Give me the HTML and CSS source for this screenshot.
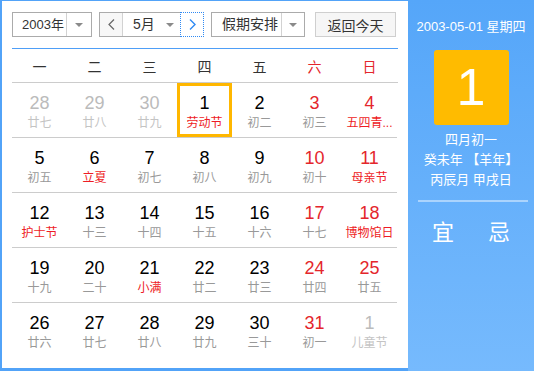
FILE: index.html
```html
<!DOCTYPE html>
<html lang="zh-CN">
<head>
  <meta charset="UTF-8" />
  <meta name="viewport" content="width=device-width, initial-scale=1.0" />
  <title>万年历</title>
  <link rel="stylesheet" href="styles.css">
</head>
<body>

<div class="calendar">
  <div class="main">
    <div class="toolbar">
      <div class="select year-select">
        <span class="select-label">2003年</span>
        <span class="select-arrow"></span>
      </div>
      <div class="select month-select">
        <span class="month-btn prev">
          <svg width="7" height="11" viewBox="0 0 7 11"><polyline points="6,0.5 1,5.5 6,10.5" fill="none" stroke="#666" stroke-width="1.2"/></svg>
        </span>
        <span class="select-label">5月</span>
        <span class="plain-arrow"></span>
        <span class="month-btn next">
          <svg width="7" height="11" viewBox="0 0 7 11"><polyline points="1,0.5 6,5.5 1,10.5" fill="none" stroke="#2f8af3" stroke-width="1.4"/></svg>
        </span>
      </div>
      <div class="select holiday-select">
        <span class="select-label">假期安排</span>
        <span class="select-arrow"></span>
      </div>
      <button class="today-btn">返回今天</button>
    </div>

    <div class="weekdays">
      <span>一</span><span>二</span><span>三</span><span>四</span><span>五</span>
      <span class="weekend">六</span><span class="weekend">日</span>
    </div>

    <div class="days">
      <div class="day other"><div class="num">28</div><div class="lunar">廿七</div></div>
      <div class="day other"><div class="num">29</div><div class="lunar">廿八</div></div>
      <div class="day other"><div class="num">30</div><div class="lunar">廿九</div></div>
      <div class="day selected"><div class="num">1</div><div class="lunar fest">劳动节</div></div>
      <div class="day"><div class="num">2</div><div class="lunar">初二</div></div>
      <div class="day weekend"><div class="num">3</div><div class="lunar">初三</div></div>
      <div class="day weekend"><div class="num">4</div><div class="lunar fest" title="五四青年节">五四青...</div></div>

      <div class="day"><div class="num">5</div><div class="lunar">初五</div></div>
      <div class="day"><div class="num">6</div><div class="lunar fest">立夏</div></div>
      <div class="day"><div class="num">7</div><div class="lunar">初七</div></div>
      <div class="day"><div class="num">8</div><div class="lunar">初八</div></div>
      <div class="day"><div class="num">9</div><div class="lunar">初九</div></div>
      <div class="day weekend"><div class="num">10</div><div class="lunar">初十</div></div>
      <div class="day weekend"><div class="num">11</div><div class="lunar fest">母亲节</div></div>

      <div class="day"><div class="num">12</div><div class="lunar fest">护士节</div></div>
      <div class="day"><div class="num">13</div><div class="lunar">十三</div></div>
      <div class="day"><div class="num">14</div><div class="lunar">十四</div></div>
      <div class="day"><div class="num">15</div><div class="lunar">十五</div></div>
      <div class="day"><div class="num">16</div><div class="lunar">十六</div></div>
      <div class="day weekend"><div class="num">17</div><div class="lunar">十七</div></div>
      <div class="day weekend"><div class="num">18</div><div class="lunar fest">博物馆日</div></div>

      <div class="day"><div class="num">19</div><div class="lunar">十九</div></div>
      <div class="day"><div class="num">20</div><div class="lunar">二十</div></div>
      <div class="day"><div class="num">21</div><div class="lunar fest">小满</div></div>
      <div class="day"><div class="num">22</div><div class="lunar">廿二</div></div>
      <div class="day"><div class="num">23</div><div class="lunar">廿三</div></div>
      <div class="day weekend"><div class="num">24</div><div class="lunar">廿四</div></div>
      <div class="day weekend"><div class="num">25</div><div class="lunar">廿五</div></div>

      <div class="day"><div class="num">26</div><div class="lunar">廿六</div></div>
      <div class="day"><div class="num">27</div><div class="lunar">廿七</div></div>
      <div class="day"><div class="num">28</div><div class="lunar">廿八</div></div>
      <div class="day"><div class="num">29</div><div class="lunar">廿九</div></div>
      <div class="day"><div class="num">30</div><div class="lunar">三十</div></div>
      <div class="day weekend"><div class="num">31</div><div class="lunar">初一</div></div>
      <div class="day other"><div class="num">1</div><div class="lunar">儿童节</div></div>
    </div>
  </div>

  <div class="side">
    <div class="side-date">2003-05-01 星期四</div>
    <div class="big-day">1</div>
    <div class="side-lunar">
      <div>四月初一</div>
      <div>癸未年 【羊年】</div>
      <div>丙辰月 甲戌日</div>
    </div>
    <div class="side-line"></div>
    <div class="yiji">
      <span>宜</span>
      <span>忌</span>
    </div>
  </div>
</div>

</body>
</html>
```

FILE: styles.css
```css
* {
  box-sizing: border-box;
}

body {
  margin: 0;
  padding: 0;
  font-family: "Liberation Sans", "Noto Sans CJK SC", sans-serif;
  background: #fff;
}

.calendar {
  display: flex;
  width: 534px;
  height: 371px;
  background: #52a3f8;
}

.main {
  width: 406px;
  height: 367px;
  margin: 1px 0 3px 2px;
  padding: 11px 10px 0;
  background: #fff;
}

/* toolbar */
.toolbar {
  display: flex;
  align-items: flex-start;
  height: 37px;
  padding-bottom: 11px;
  border-bottom: 1px solid #4e9ef7;
}

.select {
  display: flex;
  align-items: center;
  height: 25px;
  border: 1px solid #ababab;
  font-size: 14px;
  color: #333;
  background: #fff;
}

.select-label {
  flex: 1;
  line-height: 23px;
  padding-left: 10px;
  white-space: nowrap;
}

.select-arrow {
  position: relative;
  width: 25px;
  height: 23px;
  border-left: 1px solid #d2d2d2;
}

.select-arrow::after,
.plain-arrow::after {
  content: "";
  position: absolute;
  left: 50%;
  top: 10px;
  margin-left: -4px;
  border-left: 4px solid transparent;
  border-right: 4px solid transparent;
  border-top: 4px solid #8a8a8a;
}

.year-select {
  width: 80px;
}

.year-select .select-label {
  padding-left: 9px;
  font-size: 13px;
}

.month-select {
  width: 105px;
  margin-left: 7px;
}

.month-select .select-label {
  padding-left: 10px;
}

.plain-arrow {
  position: relative;
  width: 20px;
  height: 23px;
}

.month-btn {
  display: flex;
  align-items: center;
  justify-content: center;
  width: 23px;
  height: 23px;
}

.month-btn.prev {
  border-right: 1px solid #d2d2d2;
  background: #f7f7f7;
}

.month-btn.next {
  height: 25px;
  width: 24px;
  margin-right: -1px;
  border: 1px dotted #2f8af3;
  background: #fff;
}

.holiday-select {
  width: 94px;
  margin-left: 7px;
}

.holiday-select .select-arrow {
  width: 23px;
}

.today-btn {
  width: 81px;
  height: 25px;
  margin-left: 10px;
  padding: 0;
  border: 1px solid #cfcfcf;
  background: #f6f6f6;
  font-family: inherit;
  font-size: 14px;
  color: #333;
}

/* week header */
.weekdays {
  display: grid;
  grid-template-columns: repeat(7, 55px);
  height: 34px;
  padding-top: 3px;
  border-bottom: 1px solid #cccccc;
  font-size: 14px;
  line-height: 30px;
  color: #333;
  text-align: center;
}

.weekdays .weekend {
  color: #e4262c;
}

/* days */
.days {
  display: grid;
  grid-template-columns: repeat(7, 55px);
  grid-auto-rows: 55px;
}

.day {
  padding-top: 10px;
  border-bottom: 1px solid #cccccc;
  text-align: center;
}

.day:nth-last-child(-n+7) {
  border-bottom: none;
}

.num {
  font-size: 18px;
  line-height: 20px;
  color: #000;
}

.lunar {
  margin-top: 2px;
  font-size: 12px;
  line-height: 16px;
  color: #999;
  white-space: nowrap;
}

.day.weekend .num {
  color: #e4262c;
}

.lunar.fest {
  color: #ee1c25;
}

.day.other .num {
  color: #bbbbbb;
}

.day.other .lunar {
  color: #c4c4c4;
}

.day.selected {
  box-shadow: inset 0 0 0 3px #ffb700;
}

/* side panel */
.side {
  width: 126px;
  height: 371px;
  background: linear-gradient(#55a6f9, #76bafd);
  color: #fff;
  text-align: center;
}

.side-date {
  padding-top: 19px;
  font-size: 13px;
  line-height: 16px;
}

.big-day {
  width: 75px;
  height: 75px;
  margin: 15px auto 0;
  border-radius: 3px;
  background: #ffbb00;
  font-size: 52px;
  line-height: 75px;
}

.side-lunar {
  margin-top: 5px;
  font-size: 13px;
  line-height: 20px;
}

.side-line {
  height: 2px;
  margin: 10px 6px 0 10px;
  background: rgba(255, 255, 255, 0.45);
}

.yiji {
  display: flex;
  justify-content: center;
  gap: 34px;
  margin-top: 19px;
  font-size: 22px;
  line-height: 24px;
}
```
